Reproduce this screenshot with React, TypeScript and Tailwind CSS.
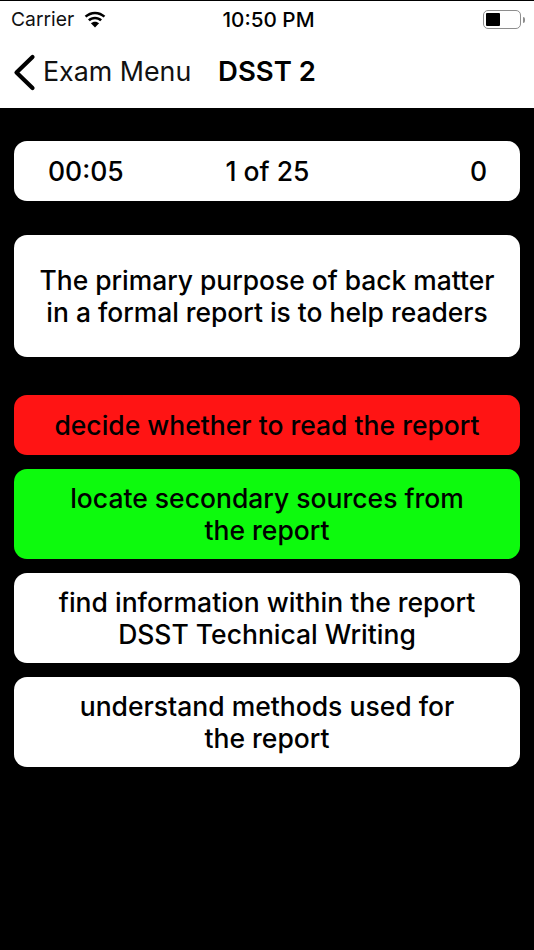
const answers = [
  { text: ["decide whether to read the report"], color: "bg-[#ff1414]", h: "h-[60px]" },
  { text: ["locate secondary sources from", "the report"], color: "bg-[#0dfa0d]", h: "h-[90px]" },
  { text: ["find information within the report", "DSST Technical Writing"], color: "bg-white", h: "h-[90px]" },
  { text: ["understand methods used for", "the report"], color: "bg-white", h: "h-[90px]" },
];

function Wifi() {
  return (
    <svg width="24" height="18" viewBox="0 0 24 18" fill="#000">
      <path d="M12 3.200c3.300 0 6.300 1.300 8.600 3.400l1.700-1.800C19.600 2.300 16 .7 12 .7S4.400 2.300 1.700 4.800l1.700 1.800C5.700 4.500 8.700 3.200 12 3.200z" />
      <path d="M12 8.200c2 0 3.800.8 5.200 2l1.800-1.800C17.100 6.700 14.700 5.700 12 5.700s-5.100 1-7 2.700l1.800 1.800c1.400-1.200 3.200-2 5.200-2z" />
      <path d="M12 10.700c-1.600 0-3 .6-4.100 1.500L12 16.500l4.100-4.300c-1.100-.9-2.500-1.500-4.100-1.500z" />
    </svg>
  );
}

function Battery() {
  return (
    <div className="flex items-center gap-[2px]">
      <div className="w-[38px] h-[19px] rounded-[5px] border-[1.5px] border-[#8e8e8e] p-[2px]">
        <div className="w-[14px] h-full bg-black rounded-[1px]" />
      </div>
      <div className="w-[2px] h-[6px] bg-[#8e8e8e] rounded-r-[2px]" />
    </div>
  );
}

function BackChevron() {
  return (
    <svg width="24" height="38" viewBox="0 0 24 38" fill="none" stroke="#000" strokeWidth="4.200" strokeLinecap="round" strokeLinejoin="round">
      <path d="M19.500 3 3.500 18.500 19.500 34" />
    </svg>
  );
}

export default function App() {
  return (
    <div className="w-[534px] h-[950px] bg-black font-['Inter','Liberation_Sans',sans-serif] text-black overflow-hidden pt-px">
      <div className="bg-white h-[107px]">
        {/* Status bar */}
        <div className="h-[37px] relative flex items-center justify-between pl-[11px] pr-[9px]">
          <div className="flex items-center gap-[9px] text-[19.300px] text-[#111]">
            <span>Carrier</span>
            <Wifi />
          </div>
          <span className="absolute left-[3px] right-0 text-center text-[20.700px] font-medium">10:50 PM</span>
          <Battery />
        </div>
        {/* Nav bar */}
        <div className="h-[70px] relative flex items-center pl-[13px] gap-[6px]">
          <BackChevron />
          <span className="text-[26.800px] text-[#111] pb-[3px]">Exam Menu</span>
          <span className="absolute left-0 right-0 text-center text-[27.500px] font-semibold pb-[2px]">DSST 2</span>
        </div>
      </div>

      <div className="px-[14px] pt-[33px] flex flex-col">
        <div className="h-[60px] pt-[2px] bg-white rounded-[13px] flex items-center justify-between pl-[34px] pr-[33px] text-[26.500px] font-medium relative">
          <span>00:05</span>
          <span className="absolute left-[1px] right-0 text-center">1 of 25</span>
          <span>0</span>
        </div>

        <div className="h-[122px] mt-[34px] bg-white rounded-[13px] flex items-center justify-center text-center text-[26.400px] leading-[32px] font-medium">
          <div>
            <div>The primary purpose of back matter</div>
            <div>in a formal report is to help readers</div>
          </div>
        </div>

        <div className="mt-[38px] flex flex-col gap-[14px]">
          {answers.map((a) => (
            <div key={a.text[0]} className={`${a.color} ${a.h} pb-[1px] rounded-[13px] flex flex-col items-center justify-center text-[26.500px] leading-[32px] font-medium`}>
              {a.text.map((line) => (
                <div key={line}>{line}</div>
              ))}
            </div>
          ))}
        </div>
      </div>
    </div>
  );
}
